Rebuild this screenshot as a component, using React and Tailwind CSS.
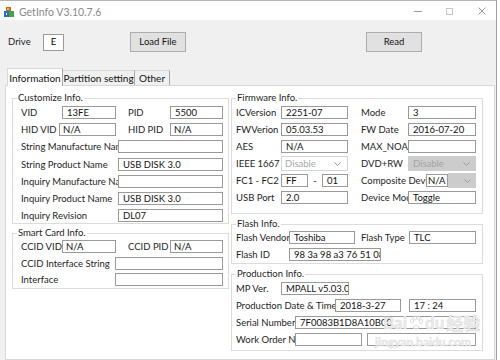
import React from "react";

const Label = ({ w, children }) => (
  <span className={`${w} shrink-0 overflow-hidden whitespace-nowrap leading-[13px] text-[#1e1e1e]`}>{children}</span>
);

const Box = ({ w, children, pl = "pl-[4px]" }) => (
  <div className={`${w} ${pl} h-[13px] shrink-0 overflow-hidden whitespace-nowrap border border-[#9a9a9a] bg-white leading-[11px] text-[#111]`}>
    {children}
  </div>
);

const Gap = ({ w }) => <span className={`${w} shrink-0`} />;

const Chevron = () => (
  <svg width="7" height="4" viewBox="0 0 7 4" className="shrink-0">
    <path d="M0.5 0.5 L3.5 3.5 L6.5 0.5" fill="none" stroke="#9a9a9a" strokeWidth="1" />
  </svg>
);

const Row = ({ children }) => <div className="flex h-[13px] items-center">{children}</div>;

const Group = ({ title, w, inner, children }) => (
  <fieldset className={`${w} border border-[#dcdcdc]`}>
    <legend className="ml-[4px] px-[1px] leading-[12px] text-[#1e1e1e]">{title}</legend>
    <div className={inner}>{children}</div>
  </fieldset>
);

export default function App() {
  return (
    <div className="flex h-[360px] w-[500px] overflow-hidden bg-white font-['Lato',sans-serif] text-[9.5px]">
      <div className="relative flex h-full w-[497px] flex-col border-r border-t border-r-[#a0a0a0] border-t-[#b4b4b4] bg-[#f0f0f0]">
        {/* title bar */}
        <div className="flex h-[19px] items-center bg-white">
          <svg width="10" height="10" viewBox="0 0 10 10" className="ml-[4px] mt-[2px]">
            <rect x="2" y="0" width="5" height="4" fill="#e0602a" />
            <rect x="3" y="1" width="2" height="2" fill="#f4b23a" />
            <rect x="0" y="4" width="5" height="6" fill="#2f6fc0" />
            <rect x="5" y="4" width="5" height="6" fill="#3fa845" />
            <rect x="2" y="6" width="1" height="2" fill="#ffffff" />
          </svg>
          <span className="ml-[5px] mt-[2px] text-[10.5px] leading-[12px] text-[#8a8a8a]">GetInfo V3.10.7.6</span>
          <div className="ml-auto mr-[10px] mt-[1px] flex items-center">
            <svg width="8" height="8" viewBox="0 0 8 8">
              <path d="M0 4.5 H8" stroke="#9a9a9a" strokeWidth="1" />
            </svg>
            <svg width="7" height="7" viewBox="0 0 7 7" className="ml-[24px]">
              <rect x="0.5" y="0.5" width="6" height="6" fill="none" stroke="#c8c8c8" strokeWidth="1" />
            </svg>
            <svg width="8" height="8" viewBox="0 0 8 8" className="ml-[25px]">
              <path d="M0.5 0.5 L7.5 7.5 M7.5 0.5 L0.5 7.5" stroke="#9a9a9a" strokeWidth="1" />
            </svg>
          </div>
        </div>

        {/* toolbar */}
        <div className="mt-[12px] flex h-[20px] items-center">
          <span className="ml-[8px] w-[35px] text-[#1e1e1e]">Drive</span>
          <div className="flex h-[17px] w-[21px] items-center justify-center border border-[#9a9a9a] bg-white leading-[12px]">E</div>
          <div className="ml-[66px] flex h-[20px] w-[56px] items-center justify-center border border-[#adadad] bg-[#e1e1e1] text-[#111]">Load File</div>
          <div className="ml-[180px] flex h-[20px] w-[56px] items-center justify-center border border-[#adadad] bg-[#e1e1e1] text-[#111]">Read</div>
        </div>

        {/* tabs */}
        <div className="ml-[7px] mt-[16px] flex h-[17px] items-end">
          <div className="relative z-10 -mb-[1px] flex h-[18px] w-[56px] items-center justify-center whitespace-nowrap border-l border-r border-t border-l-[#d9d9d9] border-r-[#a8a8a8] border-t-[#d9d9d9] bg-white text-[10px] leading-[12px] text-[#111]">
            Information
          </div>
          <div className="flex h-[15px] w-[72px] items-center justify-center whitespace-nowrap border-r border-t border-r-[#a8a8a8] border-t-[#d9d9d9] text-[10px] leading-[12px] text-[#111]">
            Partition setting
          </div>
          <div className="flex h-[15px] w-[35px] items-center justify-center whitespace-nowrap border-r border-t border-r-[#a8a8a8] border-t-[#d9d9d9] text-[10px] leading-[12px] text-[#111]">
            Other
          </div>
        </div>

        {/* panel */}
        <div className="ml-[5px] mr-[1px] flex flex-1 border border-[#d9d9d9] bg-white pl-[6px] pt-[6px]">
          {/* left column */}
          <div className="flex w-[217px] flex-col gap-[3px]">
            <Group title="Customize Info." w="w-[217px]" inner="flex flex-col gap-[4.2px] pl-[8px] pt-[2px] pb-[1px]">
              <Row>
                <Label w="w-[41px]">VID</Label>
                <Box w="w-[54px]">13FE</Box>
                <Gap w="w-[12px]" />
                <Label w="w-[42px]">PID</Label>
                <Box w="w-[53px]">5500</Box>
              </Row>
              <Row>
                <Label w="w-[38px]">HID VID</Label>
                <Box w="w-[57px]" pl="pl-[3px]">N/A</Box>
                <Gap w="w-[12px]" />
                <Label w="w-[42px]">HID PID</Label>
                <Box w="w-[53px]" pl="pl-[3px]">N/A</Box>
              </Row>
              <Row>
                <Label w="w-[97px]">String Manufacture Name</Label>
                <Box w="w-[105px]"></Box>
              </Row>
              <Row>
                <Label w="w-[97px]">String Product Name</Label>
                <Box w="w-[105px]">USB DISK 3.0</Box>
              </Row>
              <Row>
                <Label w="w-[97px]">Inquiry Manufacture Name</Label>
                <Box w="w-[105px]"></Box>
              </Row>
              <Row>
                <Label w="w-[97px]">Inquiry Product Name</Label>
                <Box w="w-[105px]">USB DISK 3.0</Box>
              </Row>
              <Row>
                <Label w="w-[97px]">Inquiry Revision</Label>
                <Box w="w-[105px]">DL07</Box>
              </Row>
            </Group>

            <Group title="Smart Card Info." w="w-[217px]" inner="flex flex-col gap-[3.6px] pl-[8px] pt-[1px] pb-[2px]">
              <Row>
                <Label w="w-[41px]">CCID VID</Label>
                <Box w="w-[54px]" pl="pl-[3px]">N/A</Box>
                <Gap w="w-[12px]" />
                <Label w="w-[42px]">CCID PID</Label>
                <Box w="w-[53px]" pl="pl-[3px]">N/A</Box>
              </Row>
              <Row>
                <Label w="w-[94px]">CCID Interface String</Label>
                <Box w="w-[108px]"></Box>
              </Row>
              <Row>
                <Label w="w-[94px]">Interface</Label>
                <Box w="w-[108px]"></Box>
              </Row>
            </Group>
          </div>

          {/* right column */}
          <div className="ml-[2px] flex w-[252px] flex-col gap-[4px]">
            <Group title="Firmware Info." w="w-[252px]" inner="flex flex-col gap-[4px] pl-[4px] pt-[2px] pb-[9px]">
              <Row>
                <Label w="w-[45px]">ICVersion</Label>
                <Box w="w-[67px]">2251-07</Box>
                <Gap w="w-[13px]" />
                <Label w="w-[47px]">Mode</Label>
                <Box w="w-[68px]">3</Box>
              </Row>
              <Row>
                <Label w="w-[45px]">FWVerion</Label>
                <Box w="w-[67px]">05.03.53</Box>
                <Gap w="w-[13px]" />
                <Label w="w-[47px]">FW Date</Label>
                <Box w="w-[68px]">2016-07-20</Box>
              </Row>
              <Row>
                <Label w="w-[45px]">AES</Label>
                <Box w="w-[67px]">N/A</Box>
                <Gap w="w-[13px]" />
                <Label w="w-[47px]">MAX_NOA</Label>
                <Box w="w-[68px]"></Box>
              </Row>
              <Row>
                <Label w="w-[45px]">IEEE 1667</Label>
                <div className="flex h-[15px] w-[67px] shrink-0 items-center justify-between border border-[#d4d4d4] bg-white pl-[3px] pr-[6px] leading-[12px] text-[#a8a8a8]">
                  <span>Disable</span>
                  <Chevron />
                </div>
                <Gap w="w-[13px]" />
                <Label w="w-[47px]">DVD+RW</Label>
                <div className="flex h-[15px] w-[68px] shrink-0 items-center justify-between border border-[#cccccc] bg-[#cccccc] pl-[4px] pr-[5px] leading-[12px] text-[#a4a4a4]">
                  <span>Disable</span>
                  <Chevron />
                </div>
              </Row>
              <Row>
                <Label w="w-[45px]">FC1 - FC2</Label>
                <Box w="w-[27px]">FF</Box>
                <span className="w-[14px] shrink-0 text-center leading-[13px] text-[#1e1e1e]">-</span>
                <Box w="w-[26px]">01</Box>
                <Gap w="w-[13px]" />
                <Label w="w-[65px]">Composite Device</Label>
                <Box w="w-[22px]" pl="pl-[1px]">N/A</Box>
                <div className="flex h-[15px] w-[28px] shrink-0 items-center justify-end bg-[#cccccc] pr-[5px]">
                  <Chevron />
                </div>
              </Row>
              <Row>
                <Label w="w-[45px]">USB Port</Label>
                <Box w="w-[67px]">2.0</Box>
                <Gap w="w-[13px]" />
                <Label w="w-[47px]">Device Mode</Label>
                <Box w="w-[68px]">Toggle</Box>
              </Row>
            </Group>

            <Group title="Flash Info." w="w-[252px]" inner="flex flex-col gap-[4px] pl-[4px] pt-[1px] pb-[2px]">
              <Row>
                <Label w="w-[53px]">Flash Vendor</Label>
                <Box w="w-[66px]">Toshiba</Box>
                <Gap w="w-[6px]" />
                <Label w="w-[48px]">Flash Type</Label>
                <Box w="w-[67px]">TLC</Box>
              </Row>
              <Row>
                <Label w="w-[53px]">Flash ID</Label>
                <Box w="w-[92px]">98 3a 98 a3 76 51 08 00</Box>
              </Row>
            </Group>

            <Group title="Production Info." w="w-[252px]" inner="flex flex-col gap-[4px] pl-[4px] pt-[2px] pb-[4px]">
              <Row>
                <Label w="w-[45px]">MP Ver.</Label>
                <Box w="w-[68px]">MPALL v5.03.0A</Box>
              </Row>
              <Row>
                <Label w="w-[99px]">Production Date &amp; Time</Label>
                <Box w="w-[66px]">2018-3-27</Box>
                <Gap w="w-[8px]" />
                <Box w="w-[67px]">17 : 24</Box>
              </Row>
              <Row>
                <Label w="w-[59px]">Serial Number</Label>
                <Box w="w-[181px]">7F0083B1D8A10B00</Box>
              </Row>
              <Row>
                <Label w="w-[59px]">Work Order No</Label>
                <Box w="w-[67px]"></Box>
                <Gap w="w-[5px]" />
                <Box w="w-[109px]"></Box>
              </Row>
            </Group>
          </div>
        </div>

        {/* watermark */}
        <div className="pointer-events-none absolute left-[383px] top-[313px] flex flex-col items-start">
          <div className="flex items-center text-[17px] font-bold leading-[18px] text-[#ececec] [-webkit-text-stroke:0.5px_#dcdcdc]">
            <span>Bai</span>
            <svg width="16" height="16" viewBox="0 0 16 16" className="mx-[1px]">
              <g fill="none" stroke="#dcdcdc" strokeWidth="1">
                <ellipse cx="4" cy="6" rx="1.6" ry="2" />
                <ellipse cx="7" cy="3" rx="1.6" ry="2" />
                <ellipse cx="10.5" cy="3" rx="1.6" ry="2" />
                <ellipse cx="13" cy="6.5" rx="1.6" ry="2" />
                <path d="M5 13 Q8 7 11 13 Q8 15 5 13 Z" />
              </g>
            </svg>
            <span>du</span>
            <span className="ml-[2px] font-['Noto_Sans_CJK_SC',sans-serif]">经验</span>
          </div>
          <div className="ml-[-8px] mt-[3px] text-[12px] font-bold leading-[13px] text-[#ececec] [-webkit-text-stroke:0.4px_#dcdcdc]">
            jingyan.baidu.com
          </div>
        </div>
      </div>
    </div>
  );
}
